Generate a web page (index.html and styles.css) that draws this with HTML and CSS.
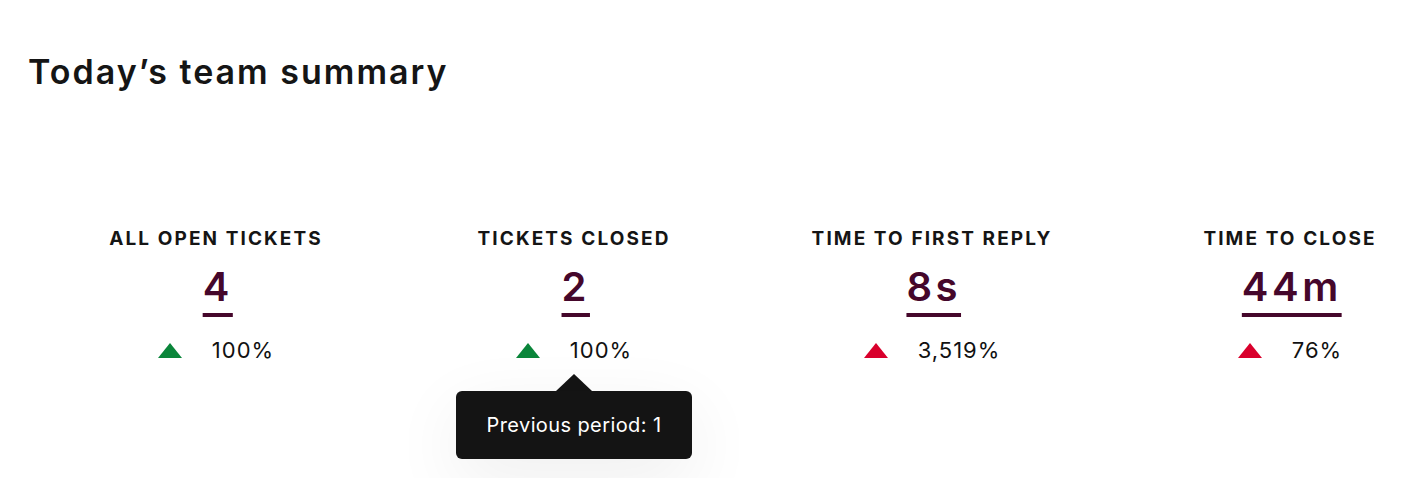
FILE: index.html
```html
<!DOCTYPE html>
<html lang="en">
<head>
  <meta charset="UTF-8" />
  <meta name="viewport" content="width=device-width, initial-scale=1.0" />
  <title>Today's team summary</title>
  <link rel="stylesheet" href="styles.css">
</head>
<body>
  <div class="summary">
    <h1 class="title">Today’s team summary</h1>

    <div class="stats">
      <div class="stat">
        <div class="stat-label">All open tickets</div>
        <a class="stat-value" href="#">4</a>
        <div class="stat-delta">
          <span class="arrow good"></span>
          <span>100%</span>
        </div>
      </div>

      <div class="stat">
        <div class="stat-label">Tickets closed</div>
        <a class="stat-value" href="#">2</a>
        <div class="stat-delta">
          <span class="arrow good"></span>
          <span>100%</span>
        </div>
        <div class="prev-period">
          <span class="prev-period-tip"></span>
          <span class="prev-period-box">Previous period: 1</span>
        </div>
      </div>

      <div class="stat">
        <div class="stat-label">Time to first reply</div>
        <a class="stat-value" href="#">8s</a>
        <div class="stat-delta">
          <span class="arrow bad"></span>
          <span>3,519%</span>
        </div>
      </div>

      <div class="stat">
        <div class="stat-label">Time to close</div>
        <a class="stat-value" href="#">44m</a>
        <div class="stat-delta">
          <span class="arrow bad"></span>
          <span>76%</span>
        </div>
      </div>
    </div>
  </div>
</body>
</html>
```

FILE: styles.css
```css
html, body {
  height: 100%;
}

body {
  margin: 0;
  padding: 0;
  background: #fff;
  font-family: Inter, 'Noto Sans', sans-serif;
  color: #111;
  overflow: hidden;
}

.summary {
  padding: 48px 28px 0 28px;
}

.title {
  margin: 0;
  font-size: 34px;
  font-weight: 600;
  letter-spacing: 2px;
  line-height: 48px;
  color: #151515;
}

.stats {
  display: grid;
  grid-template-columns: repeat(4, 358px);
  align-items: start;
  margin-left: 9px;
  margin-top: 131px;
}

.stat {
  display: flex;
  flex-direction: column;
  align-items: center;
  text-align: center;
}

.stat-label {
  font-size: 19px;
  font-weight: 700;
  text-transform: uppercase;
  letter-spacing: 2.1px;
  line-height: 24px;
  color: #151515;
}

.stat-value {
  margin-top: 13px;
  font-size: 40px;
  font-weight: 600;
  letter-spacing: 3.5px;
  text-indent: 3.5px;
  line-height: 46px;
  color: #45072b;
  text-decoration: underline;
  text-decoration-thickness: 4px;
  text-underline-offset: 12px;
}

.stat-delta {
  margin-top: 26px;
  display: flex;
  align-items: center;
  gap: 30px;
  font-size: 22px;
  letter-spacing: 1px;
  line-height: 28px;
  color: #111;
}

.arrow {
  width: 0;
  height: 0;
  border-left: 12px solid transparent;
  border-right: 12px solid transparent;
  border-bottom: 15px solid;
}

.good {
  border-bottom-color: #0a853a;
}

.bad {
  border-bottom-color: #d9002c;
}

.prev-period {
  margin-top: 10px;
  display: flex;
  flex-direction: column;
  align-items: center;
}

.prev-period-tip {
  width: 0;
  height: 0;
  border-left: 18px solid transparent;
  border-right: 18px solid transparent;
  border-bottom: 17px solid #141414;
}

.prev-period-box {
  width: 236px;
  height: 68px;
  display: flex;
  align-items: center;
  justify-content: center;
  background: #141414;
  color: #fff;
  font-size: 20px;
  letter-spacing: 0.4px;
  border-radius: 6px;
  white-space: nowrap;
  box-shadow: 0 20px 70px rgba(0, 0, 0, 0.07);
}
```
